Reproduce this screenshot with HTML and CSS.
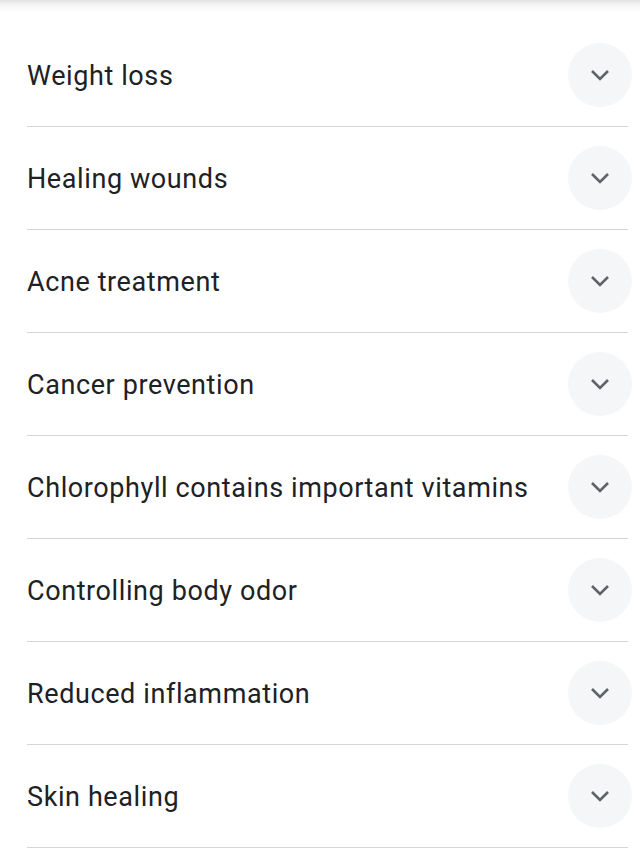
FILE: index.html
```html
<!DOCTYPE html>
<html lang="en">
  <head>
    <meta charset="UTF-8" />
    <meta name="viewport" content="width=device-width, initial-scale=1.0" />
    <title>Benefits</title>
    <link rel="stylesheet" href="styles.css">
  </head>
  <body>
    <div class="top-shadow"></div>

    <ul class="faq-list">
      <li class="faq-item">
        <span class="faq-title">Weight loss</span>
        <button class="expand-button" aria-label="Expand">
          <svg viewBox="0 0 20 12" width="20" height="12"><polyline points="2,2 10,10 18,2" /></svg>
        </button>
      </li>
      <li class="faq-item">
        <span class="faq-title">Healing wounds</span>
        <button class="expand-button" aria-label="Expand">
          <svg viewBox="0 0 20 12" width="20" height="12"><polyline points="2,2 10,10 18,2" /></svg>
        </button>
      </li>
      <li class="faq-item">
        <span class="faq-title">Acne treatment</span>
        <button class="expand-button" aria-label="Expand">
          <svg viewBox="0 0 20 12" width="20" height="12"><polyline points="2,2 10,10 18,2" /></svg>
        </button>
      </li>
      <li class="faq-item">
        <span class="faq-title">Cancer prevention</span>
        <button class="expand-button" aria-label="Expand">
          <svg viewBox="0 0 20 12" width="20" height="12"><polyline points="2,2 10,10 18,2" /></svg>
        </button>
      </li>
      <li class="faq-item">
        <span class="faq-title">Chlorophyll contains important vitamins</span>
        <button class="expand-button" aria-label="Expand">
          <svg viewBox="0 0 20 12" width="20" height="12"><polyline points="2,2 10,10 18,2" /></svg>
        </button>
      </li>
      <li class="faq-item">
        <span class="faq-title">Controlling body odor</span>
        <button class="expand-button" aria-label="Expand">
          <svg viewBox="0 0 20 12" width="20" height="12"><polyline points="2,2 10,10 18,2" /></svg>
        </button>
      </li>
      <li class="faq-item">
        <span class="faq-title">Reduced inflammation</span>
        <button class="expand-button" aria-label="Expand">
          <svg viewBox="0 0 20 12" width="20" height="12"><polyline points="2,2 10,10 18,2" /></svg>
        </button>
      </li>
      <li class="faq-item">
        <span class="faq-title">Skin healing</span>
        <button class="expand-button" aria-label="Expand">
          <svg viewBox="0 0 20 12" width="20" height="12"><polyline points="2,2 10,10 18,2" /></svg>
        </button>
      </li>
    </ul>
  </body>
</html>
```

FILE: styles.css
```css
* {
  margin: 0;
  padding: 0;
  box-sizing: border-box;
}

body {
  background: #fff;
  color: #202124;
  font-family: Roboto, "Noto Sans", Arial, sans-serif;
  overflow: hidden;
}

.top-shadow {
  height: 12px;
  background: linear-gradient(#e2e2e2, #f4f4f4 40%, #fff);
}

.faq-list {
  list-style: none;
  padding-top: 12px;
}

.faq-item {
  display: flex;
  align-items: center;
  justify-content: space-between;
  height: 103px;
  margin: 0 12px 0 27px;
  border-bottom: 1px solid #d6d6d6;
}

.faq-title {
  font-size: 27px;
  letter-spacing: 0.6px;
  line-height: 1;
  padding-top: 2px;
}

.expand-button {
  width: 64px;
  height: 64px;
  margin-right: -4px;
  border: none;
  border-radius: 50%;
  background: #f5f6f7;
  display: flex;
  align-items: center;
  justify-content: center;
  cursor: pointer;
}

.expand-button svg {
  fill: none;
  stroke: #5f6368;
  stroke-width: 2.6;
}
```
